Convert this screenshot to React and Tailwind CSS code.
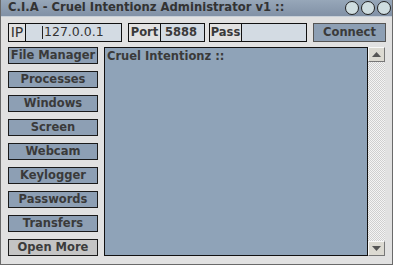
import React from "react";

const F = { fontFamily: '"DejaVu Sans", Verdana, sans-serif' };

function Btn({ label, gray }) {
  return (
    <div
      className={`h-[17px] border border-[#1a1a1a] flex items-center justify-center text-[11.5px] font-bold leading-none ${
        gray ? "bg-[#c4c4c4] text-[#3c3c3c]" : "bg-[#8d9fb4] text-[#3a3a3a]"
      }`}
    >
      {label}
    </div>
  );
}

export default function App() {
  const buttons = [
    "File Manager",
    "Processes",
    "Windows",
    "Screen",
    "Webcam",
    "Keylogger",
    "Passwords",
    "Transfers",
  ];
  return (
    <div style={F} className="w-[393px] h-[265px] bg-[#e1e1e1] border-l border-r border-b border-[#6a6a6a] flex flex-col overflow-hidden">
      {/* Title bar */}
      <div className="h-[17px] flex items-center justify-between bg-gradient-to-b from-[#97a7b9] to-[#8191a6] border-b border-[#c8d0d8]">
        <span className="pl-[7px] text-[11.6px] font-bold text-[#333333] leading-none">
          C.I.A - Cruel Intentionz Administrator v1 ::
        </span>
        <div className="flex gap-[2px] pr-[1px]">
          {[0, 1, 2].map((i) => (
            <div key={i} className="w-[14px] h-[14px] rounded-full border border-[#222] bg-[#cfdde0]" />
          ))}
        </div>
      </div>

      {/* Connection row */}
      <div className="flex items-center mt-[6px] pl-[7px] h-[19px]">
        <div className="flex h-[19px] w-[114px] border border-[#111] text-[11.5px] font-bold text-[#333]">
          <div className="w-[17px] border-r border-[#111] flex items-center justify-center text-[14px] font-normal">IP</div>
          <div className="flex-1 bg-[#d3dbe3] flex items-center pl-[16px] font-normal text-[12.5px]">
            <span className="w-px h-[13px] bg-[#222] mr-px" />127.0.0.1
          </div>
        </div>
        <div className="ml-[6px] flex h-[19px] w-[77px] border border-[#111] text-[11.5px] font-bold text-[#3a3a3a]">
          <div className="w-[32px] border-r border-[#111] flex items-center justify-center bg-[#e1e1e1]">Port</div>
          <div className="flex-1 bg-[#d3dbe3] flex items-center pl-[4px]">5888</div>
        </div>
        <div className="ml-[4px] flex h-[19px] w-[98px] border border-[#111] text-[11.5px] font-bold text-[#3a3a3a]">
          <div className="w-[32px] border-r border-[#111] flex items-center justify-center bg-[#e1e1e1]">Pass</div>
          <div className="flex-1 bg-[#d3dbe3]" />
        </div>
        <div className="ml-[6px] h-[19px] w-[73px] border border-[#555] bg-[#8d9fb4] flex items-center justify-center text-[11.5px] font-bold text-[#3a3a3a]">
          Connect
        </div>
      </div>

      {/* Main */}
      <div className="flex mt-[5px] pl-[7px]">
        <div className="w-[90px] flex flex-col gap-[7px]">
          {buttons.map((b) => (
            <Btn key={b} label={b} />
          ))}
          <Btn label="Open More" gray />
        </div>
        <div className="ml-[6px] w-[264px] h-[209px] border border-[#111] bg-[#8fa3b8] pl-[2px] pt-[3px] text-[11.5px] font-bold text-[#3a3a3a] leading-none">
          Cruel Intentionz ::
        </div>
        <div
          className="w-[17px] h-[209px] flex flex-col justify-between"
          style={{
            backgroundColor: "#f4f4f4",
            backgroundImage:
              "linear-gradient(45deg,#cfcfcf 25%,transparent 25%,transparent 75%,#cfcfcf 75%),linear-gradient(45deg,#cfcfcf 25%,transparent 25%,transparent 75%,#cfcfcf 75%)",
            backgroundSize: "2px 2px",
            backgroundPosition: "0 0,1px 1px",
          }}
        >
          <div className="h-[15px] w-[17px] bg-[#dcdad2] border border-t-[#f8f8f8] border-l-[#f8f8f8] border-r-[#777] border-b-[#777] flex items-center justify-center">
            <svg width="9" height="5" viewBox="0 0 9 5"><path d="M0 5 L4.5 0 L9 5 Z" fill="#555" /></svg>
          </div>
          <div className="h-[15px] w-[17px] bg-[#dcdad2] border border-t-[#f8f8f8] border-l-[#f8f8f8] border-r-[#777] border-b-[#777] flex items-center justify-center">
            <svg width="9" height="5" viewBox="0 0 9 5"><path d="M0 0 L4.5 5 L9 0 Z" fill="#555" /></svg>
          </div>
        </div>
      </div>
    </div>
  );
}
